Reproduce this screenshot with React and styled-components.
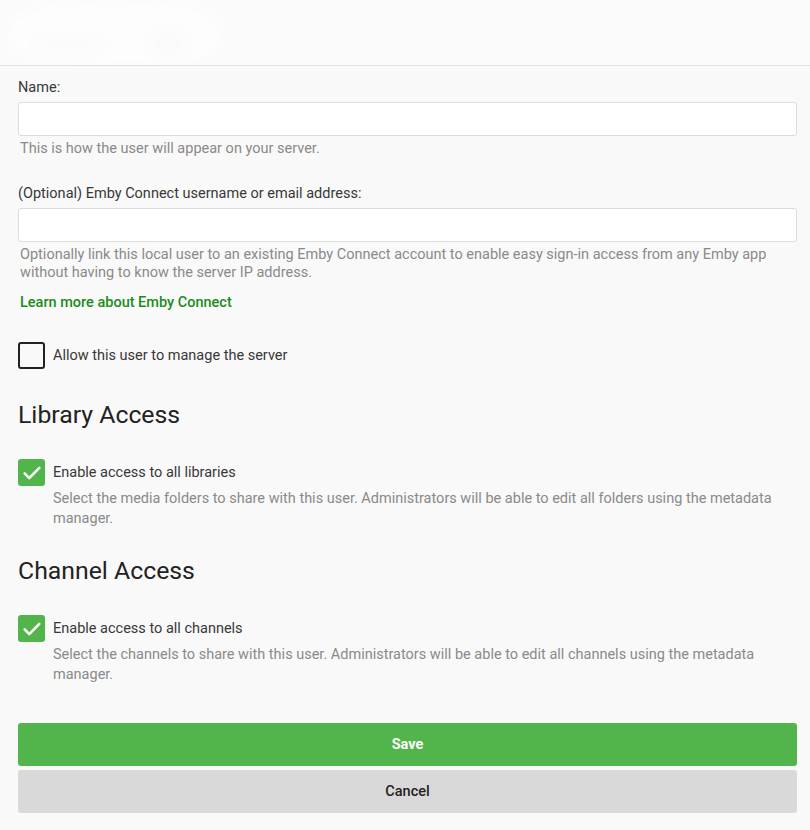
import React, { useState } from 'react'
import styled, { createGlobalStyle } from 'styled-components'

const Global = createGlobalStyle`
  html, body {
    margin: 0;
    padding: 0;
    background: #f9f9f9;
    font-family: Roboto, "Noto Sans", "Liberation Sans", sans-serif;
    color: #222;
  }
  * { box-sizing: border-box; }
`

const Header = styled.div`
  position: relative;
  height: 66px;
  background: #fbfbfb;
  border-bottom: 1px solid #e0e0e0;
  overflow: hidden;
`

const Blob = styled.div`
  position: absolute;
  left: ${p => p.$x}px;
  top: ${p => p.$y}px;
  width: ${p => p.$w}px;
  height: ${p => p.$h}px;
  border-radius: 40%;
  background: ${p => p.$c};
  filter: blur(6px);
`

const Form = styled.form`
  padding: 12px 13px 20px 18px;
  display: flex;
  flex-direction: column;
`

const Label = styled.label`
  font-size: 14.5px;
  line-height: 20px;
  color: #383838;
  margin-bottom: 4px;
  margin-top: ${p => p.$top || 0}px;
`

const Input = styled.input`
  height: 34px;
  width: 100%;
  background: #fff;
  border: 1px solid #dcdcdc;
  border-radius: 3px;
  padding: 0 8px;
  font: inherit;
  font-size: 14.5px;
  outline: none;
`

const Help = styled.div`
  font-size: 14.5px;
  line-height: 18px;
  color: #8a8a8a;
  margin: 4px 0 0 2px;
`

const Link = styled.a`
  display: block;
  font-size: 14.5px;
  line-height: 20px;
  font-weight: 500;
  color: #1c8c1c;
  text-decoration: none;
  margin: 11px 0 0 2px;
`

const CheckRow = styled.label`
  display: flex;
  align-items: center;
  gap: 8px;
  margin-top: ${p => p.$top}px;
  font-size: 14.5px;
  color: #383838;
  cursor: pointer;
`

const Box = styled.span`
  width: 27px;
  height: 27px;
  flex: none;
  border-radius: 3px;
  display: flex;
  align-items: center;
  justify-content: center;
  background: ${p => (p.$checked ? '#52b54b' : 'transparent')};
  border: ${p => (p.$checked ? 'none' : '2px solid #222')};
`

const Desc = styled.div`
  font-size: 14.5px;
  line-height: 20px;
  color: #8a8a8a;
  margin: 3px 0 0 35px;
`

const Heading = styled.h2`
  font-size: 24.8px;
  line-height: 30px;
  font-weight: 400;
  color: #222;
  margin: ${p => p.$top}px 0 0 0;
`

const Button = styled.button`
  width: 100%;
  height: ${p => p.$h}px;
  border: none;
  border-radius: 3px;
  font: inherit;
  font-size: 14.5px;
  font-weight: ${p => (p.$primary ? 700 : 500)};
  color: ${p => (p.$primary ? '#fff' : '#222')};
  background: ${p => (p.$primary ? '#52b54b' : '#d9d9d9')};
  margin-top: ${p => p.$top}px;
  cursor: pointer;
`

function Checkbox({ checked, onToggle, label, top }) {
  return (
    <CheckRow $top={top} onClick={onToggle}>
      <Box $checked={checked}>
        {checked && (
          <svg width="22" height="22" viewBox="0 0 24 24" fill="none" stroke="#fff" strokeWidth="2.8" strokeLinecap="round" strokeLinejoin="round">
            <path d="M4 12.5l5 5L20 6.5" />
          </svg>
        )}
      </Box>
      {label}
    </CheckRow>
  )
}

export default function App() {
  const [admin, setAdmin] = useState(false)
  const [libs, setLibs] = useState(true)
  const [chans, setChans] = useState(true)

  return (
    <>
      <Global />
      <Header>
        <Blob $x={10} $y={4} $w={210} $h={60} $c="#fdfdfd" />
        <Blob $x={32} $y={36} $w={74} $h={18} $c="#fafafa" />
        <Blob $x={148} $y={30} $w={40} $h={26} $c="#fafafa" />
      </Header>
      <Form onSubmit={e => e.preventDefault()}>
        <Label>Name:</Label>
        <Input type="text" />
        <Help>This is how the user will appear on your server.</Help>

        <Label $top={26}>(Optional) Emby Connect username or email address:</Label>
        <Input type="text" />
        <Help>
          Optionally link this local user to an existing Emby Connect account to enable easy sign-in access from any Emby app
          without having to know the server IP address.
        </Help>
        <Link href="#">Learn more about Emby Connect</Link>

        <Checkbox top={29} checked={admin} onToggle={() => setAdmin(!admin)} label="Allow this user to manage the server" />

        <Heading $top={31}>Library Access</Heading>
        <Checkbox top={29} checked={libs} onToggle={() => setLibs(!libs)} label="Enable access to all libraries" />
        <Desc>Select the media folders to share with this user. Administrators will be able to edit all folders using the metadata manager.</Desc>

        <Heading $top={27}>Channel Access</Heading>
        <Checkbox top={29} checked={chans} onToggle={() => setChans(!chans)} label="Enable access to all channels" />
        <Desc>Select the channels to share with this user. Administrators will be able to edit all channels using the metadata manager.</Desc>

        <Button $primary $h={43} $top={38} type="submit">Save</Button>
        <Button $h={43} $top={4} type="button">Cancel</Button>
      </Form>
    </>
  )
}
